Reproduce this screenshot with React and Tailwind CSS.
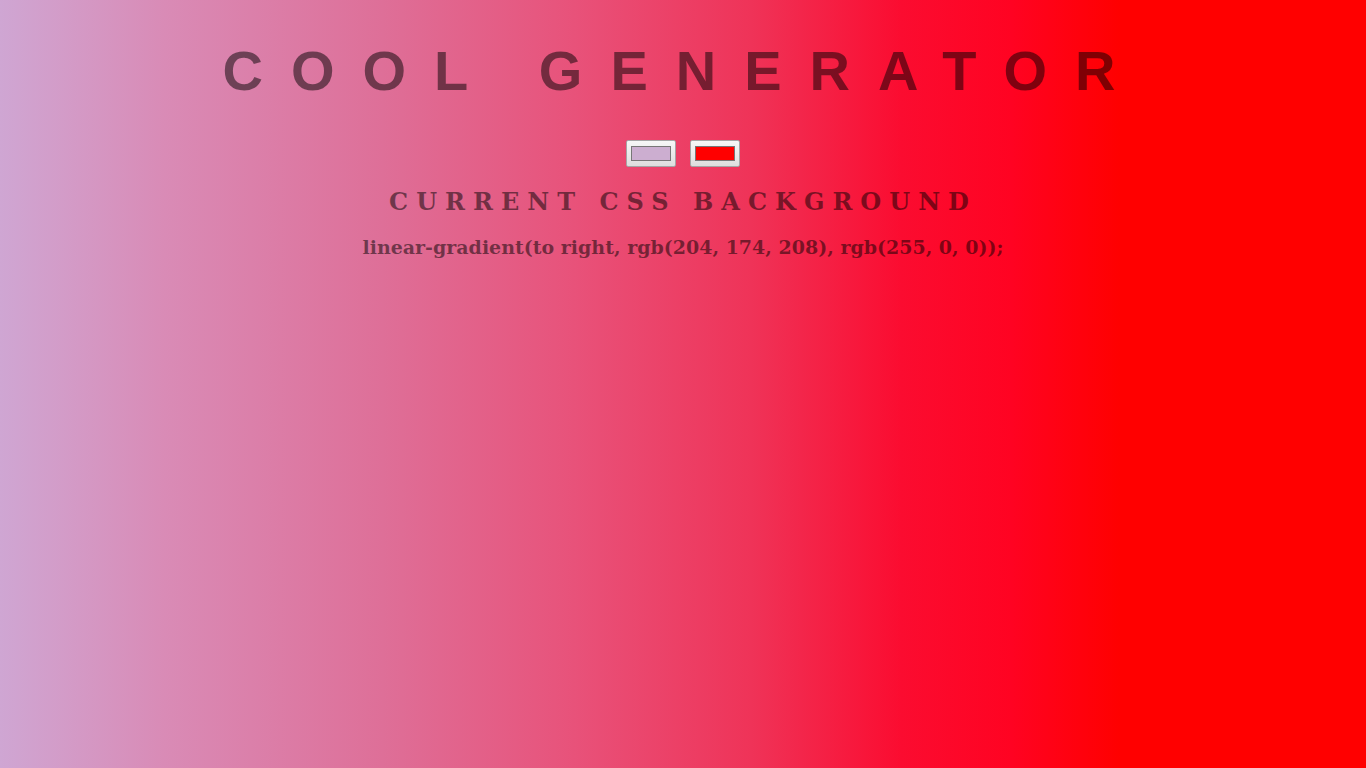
import React, { useState } from 'react';

const App = () => {
    const [left, setLeft] = useState('#ccaed0');
    const [right, setRight] = useState('#ff0000');

    return (
        <div className="min-h-screen w-full bg-[linear-gradient(to_right,#cfa6d3_0%,#d98bb6_12%,#de6f98_28%,#e8527a_42%,#ef3358_55%,#fb0c30_66%,#ff0322_74%,#ff0000_82%,#ff0000_100%)] text-center">
            <h1 className="pt-[39px] font-['Liberation_Sans',Arial,sans-serif] text-[56px] font-bold leading-[1.15] tracking-[0.5em] text-black/50">
                COOL GENERATOR
            </h1>
            <div className="mt-[37px] flex justify-center gap-[14px]">
                <input
                    type="color"
                    value={left}
                    onChange={(e) => setLeft(e.target.value)}
                    className="h-[27px] w-[50px] rounded-[2px] border border-[#a5a5a5] bg-[linear-gradient(#f7f7f7,#dedede)] px-[2px] py-[1px]"
                />
                <input
                    type="color"
                    value={right}
                    onChange={(e) => setRight(e.target.value)}
                    className="h-[27px] w-[50px] rounded-[2px] border border-[#a5a5a5] bg-[linear-gradient(#f7f7f7,#dedede)] px-[2px] py-[1px]"
                />
            </div>
            <h2 className="mt-[17px] font-['DejaVu_Serif',serif] text-[24px] font-bold tracking-[8px] text-black/50">
                CURRENT CSS BACKGROUND
            </h2>
            <h3 className="mt-[13px] font-['DejaVu_Serif',serif] text-[19px] font-bold text-black/50">
                linear-gradient(to right, rgb(204, 174, 208), rgb(255, 0, 0));
            </h3>
        </div>
    );
};

export default App;
